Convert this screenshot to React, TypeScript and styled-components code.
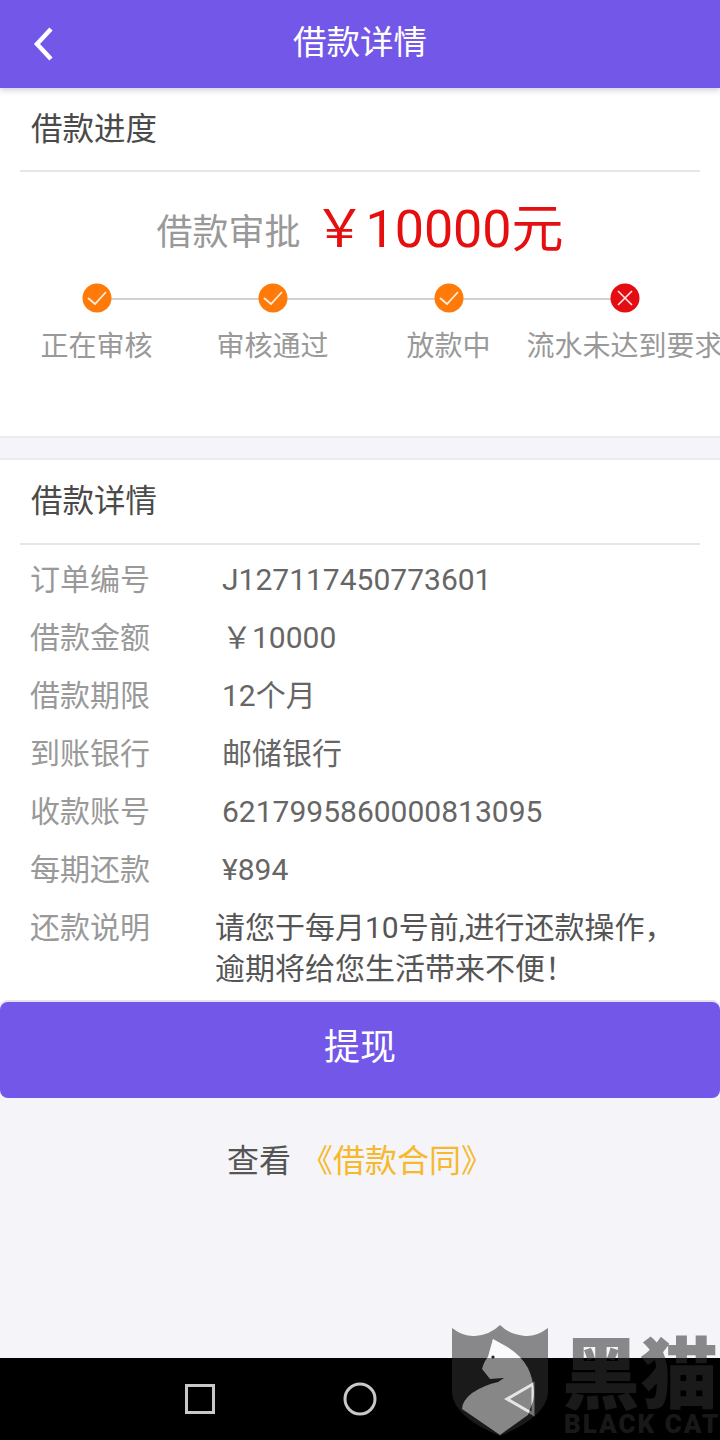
import React from 'react';
import styled, { createGlobalStyle } from 'styled-components';

const PURPLE = '#7257e8';
const CJK = '"Noto Sans CJK SC", Roboto, sans-serif';

const GlobalStyle = createGlobalStyle`
  html, body {
    margin: 0;
    padding: 0;
    background: #f4f4f9;
  }
  * {
    box-sizing: border-box;
  }
`;

const Page = styled.div`
  position: relative;
  display: flex;
  flex-direction: column;
  width: 720px;
  height: 1440px;
  overflow: hidden;
  background: #f4f4f9;
  font-family: Roboto, ${CJK};
`;

const Header = styled.header`
  position: relative;
  z-index: 1;
  display: flex;
  align-items: center;
  justify-content: center;
  flex: none;
  height: 88px;
  padding-bottom: 10px;
  background: ${PURPLE};
  box-shadow: 0 2px 6px rgba(60, 50, 110, 0.25);
  color: #fff;
  font-size: 33.5px;
`;

const BackButton = styled.svg`
  position: absolute;
  top: 25px;
  left: 32px;
  width: 24px;
  height: 36px;
`;

const Card = styled.section`
  background: #fff;
`;

const ProgressCard = styled(Card)`
  flex: none;
  height: 350px;
  border-bottom: 2px solid #ebebef;
`;

const DetailCard = styled(Card)`
  flex: none;
  height: 544px;
  margin-top: 20px;
  border-top: 2px solid #ebebef;
`;

const CardTitle = styled.div<{ $height: number }>`
  display: flex;
  align-items: center;
  height: ${props => props.$height}px;
  margin: 0 20px;
  padding: 0 0 7px 11px;
  border-bottom: 2px solid #e6e6e8;
  color: #4a4a4a;
  font-size: 31.5px;
`;

const AmountRow = styled.div`
  display: flex;
  align-items: flex-start;
  justify-content: center;
  gap: 13px;
  height: 90px;
  color: #999;
  font-size: 36px;
`;

const AmountLabel = styled.span`
  margin-top: 41px;
  line-height: 40px;
`;

const Amount = styled.span`
  margin-top: 28px;
  color: #e60f0f;
  font-size: 52px;
  line-height: 60px;
`;

const Steps = styled.div`
  display: grid;
  grid-template-columns: repeat(4, 176px);
  margin: 21px 0 0 8.5px;
`;

const Step = styled.div<{ $last?: boolean }>`
  position: relative;
  display: flex;
  flex-direction: column;
  align-items: center;
  gap: 11px;
  color: #999;
  font-size: 28px;
  white-space: nowrap;

  &::after {
    content: '';
    display: ${props => (props.$last ? 'none' : 'block')};
    position: absolute;
    top: 15px;
    left: 50%;
    width: 100%;
    height: 2px;
    background: #d0d0d0;
  }
`;

const StepDot = styled.svg`
  position: relative;
  z-index: 1;
  width: 30px;
  height: 30px;
`;

const Rows = styled.div`
  display: flex;
  flex-direction: column;
  padding: 6px 0 0 30px;
`;

const Row = styled.div`
  display: grid;
  grid-template-columns: 192px 1fr;
  align-items: baseline;
  height: 58px;
  font-size: 30px;
  line-height: 58px;
`;

const RowLabel = styled.span`
  color: #999;
`;

const RowValue = styled.span`
  color: #666;
`;

const NoteRow = styled.div`
  display: grid;
  grid-template-columns: 185px 1fr;
  margin-top: 8px;
  font-size: 30px;
  line-height: 41px;
`;

const NoteValue = styled.span`
  color: #555;
`;

const WithdrawButton = styled.button`
  flex: none;
  width: 720px;
  height: 96px;
  padding: 0 0 12px;
  border: 0;
  border-radius: 8px;
  background: ${PURPLE};
  box-shadow: 0 -2px 0 #e6e3f2;
  color: #fff;
  font-family: ${CJK};
  font-size: 36px;
`;

const ContractLine = styled.div`
  display: flex;
  justify-content: center;
  gap: 10px;
  margin-top: 41px;
  color: #555;
  font-size: 32px;
  line-height: 44px;
`;

const ContractLink = styled.span`
  color: #f6b92b;
`;

const NavBar = styled.nav`
  display: grid;
  grid-template-columns: repeat(3, 160px);
  justify-content: center;
  align-items: center;
  flex: none;
  height: 82px;
  margin-top: auto;
  background: #000;
`;

const NavCell = styled.div`
  display: flex;
  justify-content: center;
`;

const NavIcon = styled.svg`
  width: 36px;
  height: 36px;
  fill: none;
  stroke: #c8c8c8;
  stroke-width: 3;
`;

const Watermark = styled.div`
  position: absolute;
  top: 1325px;
  left: 450px;
  display: flex;
  width: 270px;
  height: 115px;
  pointer-events: none;
`;

const Shield = styled.svg`
  flex: none;
  width: 100px;
  height: 115px;
`;

const Brand = styled.div`
  display: flex;
  flex-direction: column;
  margin-left: 14px;
  padding-top: 5px;
  color: rgba(47, 47, 47, 0.55);
  font-weight: 900;
  white-space: nowrap;
`;

const BrandName = styled.span`
  margin-left: -2px;
  font-family: ${CJK};
  font-size: 78px;
  line-height: 78px;
`;

const BrandLatin = styled.span`
  margin-top: 3px;
  font-family: Roboto, sans-serif;
  font-size: 26px;
  line-height: 26px;
  letter-spacing: 2px;
`;

const CAT =
  'M43 14 L50 18 Q70 28 78 43 Q86 60 83 76 L78 90 L50 110 L12 84 Q12 76 22 68 Q34 60 48 57 L54 53 L40 54 L32 44 Q34 36 38 32 Z';
const SHIELD =
  'M2 3 Q14 12 25 11 Q40 10 50 0 Q60 10 75 11 Q86 12 98 3 L98 68 Q96 92 50 111 Q4 92 2 68 Z';

const details = [
  { label: '订单编号', value: 'J127117450773601' },
  { label: '借款金额', value: '￥10000' },
  { label: '借款期限', value: '12个月' },
  { label: '到账银行', value: '邮储银行' },
  { label: '收款账号', value: '6217995860000813095' },
  { label: '每期还款', value: '¥894' },
];

const steps = [
  { label: '正在审核', failed: false },
  { label: '审核通过', failed: false },
  { label: '放款中', failed: false },
  { label: '流水未达到要求', failed: true },
];

const App: React.FC = function() {
  return (
    <Page>
      <GlobalStyle />
      <Header>
        <BackButton viewBox="0 0 24 36">
          <path d="M19 4 L5 19 L19 34" fill="none" stroke="#fff" strokeWidth="4.5" />
        </BackButton>
        借款详情
      </Header>

      <ProgressCard>
        <CardTitle $height={84}>借款进度</CardTitle>
        <AmountRow>
          <AmountLabel>借款审批</AmountLabel>
          <Amount>￥10000元</Amount>
        </AmountRow>
        <Steps>
          {steps.map((step, i) => (
            <Step key={step.label} $last={i === steps.length - 1}>
              <StepDot viewBox="0 0 30 30">
                <circle cx="15" cy="15" r="14.5" fill={step.failed ? '#e60d12' : '#ff7a08'} />
                {step.failed ? (
                  <path d="M8 8 L22 22 M22 8 L8 22" fill="none" stroke="#fbe9e9" strokeWidth="1.6" />
                ) : (
                  <path d="M6 15 L13 21 L24 9" fill="none" stroke="#fdf0e0" strokeWidth="1.8" />
                )}
              </StepDot>
              {step.label}
            </Step>
          ))}
        </Steps>
      </ProgressCard>

      <DetailCard>
        <CardTitle $height={85}>借款详情</CardTitle>
        <Rows>
          {details.map(row => (
            <Row key={row.label}>
              <RowLabel>{row.label}</RowLabel>
              <RowValue>{row.value}</RowValue>
            </Row>
          ))}
          <NoteRow>
            <RowLabel>还款说明</RowLabel>
            <NoteValue>
              请您于每月10号前,进行还款操作，
              <br />
              逾期将给您生活带来不便！
            </NoteValue>
          </NoteRow>
        </Rows>
      </DetailCard>

      <WithdrawButton>提现</WithdrawButton>

      <ContractLine>
        查看
        <ContractLink>《借款合同》</ContractLink>
      </ContractLine>

      <NavBar>
        <NavCell>
          <NavIcon viewBox="0 0 36 36">
            <rect x="4.5" y="4.5" width="27" height="27" />
          </NavIcon>
        </NavCell>
        <NavCell>
          <NavIcon viewBox="0 0 36 36">
            <circle cx="18" cy="18" r="15" />
          </NavIcon>
        </NavCell>
        <NavCell>
          <NavIcon viewBox="0 0 36 36">
            <path d="M5 18 L31 3 L31 33 Z" />
          </NavIcon>
        </NavCell>
      </NavBar>

      <Watermark>
        <Shield viewBox="0 0 100 115">
          <path d={SHIELD + ' ' + CAT} fill="rgba(47,47,47,0.55)" fillRule="evenodd" />
          <path d={CAT} fill="rgba(255,255,255,0.53)" />
          <circle cx="43" cy="32" r="1.6" fill="#222" />
        </Shield>
        <Brand>
          <BrandName>黑猫</BrandName>
          <BrandLatin>BLACK CAT</BrandLatin>
        </Brand>
      </Watermark>
    </Page>
  );
};

export default App;
